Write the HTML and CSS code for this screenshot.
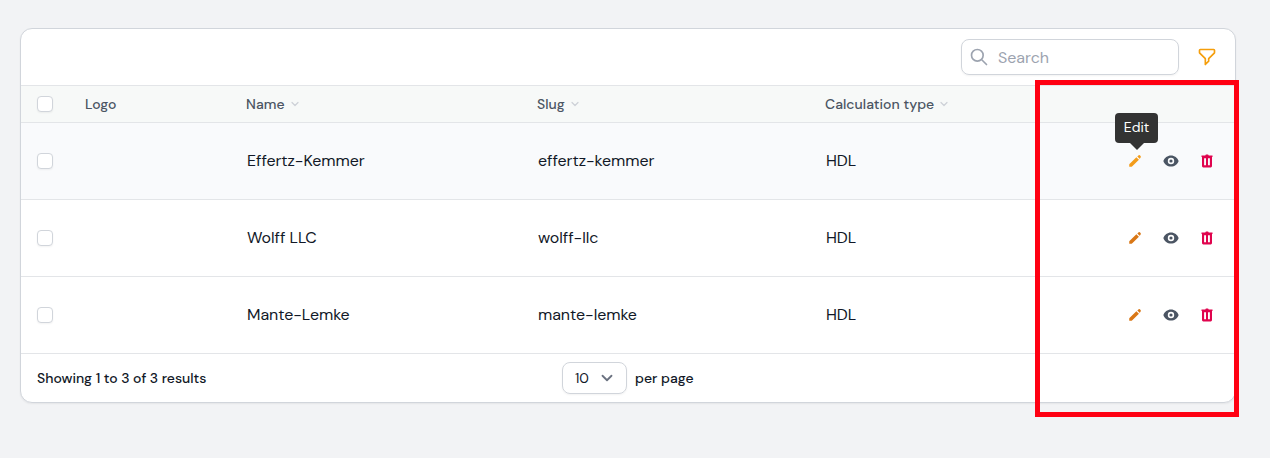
FILE: index.html
```html
<!DOCTYPE html>
<html lang="en">
<head>
<meta charset="utf-8">
<title>Results</title>
<link rel="stylesheet" href="styles.css">
</head>
<body>
<svg class="defs" aria-hidden="true">
  <symbol id="pencil" viewBox="0 0 20 20"><path d="M13.9 3.300a2 2 0 0 1 2.800 0 2 2 0 0 1 0 2.800l-1 1-2.800-2.800zM11.700 5.300l3.200 3.200-8.300 8.200a1.200 1.200 0 0 1-.8.400H2.800V14.500a1.200 1.200 0 0 1 .3-.7z"/></symbol>
  <symbol id="eye" viewBox="0 0 20 20"><path d="M10 12a2 2 0 100-4 2 2 0 000 4z"/><path fill-rule="evenodd" d="M.458 10C1.732 5.943 5.522 3 10 3s8.268 2.943 9.542 7c-1.274 4.057-5.064 7-9.542 7S1.732 14.057.458 10zM14 10a4 4 0 11-8 0 4 4 0 018 0z"/></symbol>
  <symbol id="trash" viewBox="0 0 16 16"><path fill-rule="evenodd" d="M6.3 2.400Q6.500 1.500 7.300 1.500h1.400q.8 0 1 .9h3.800v1.700H13v9q0 1.300-1.300 1.300H4.300Q3 14.400 3 13.100v-9h-.5V2.400zM5.100 5.300v6.900h1.900V5.300zM9 5.300v6.900h1.900V5.300z"/></symbol>
  <symbol id="chevron" viewBox="0 0 20 20"><path d="M5 7.500l5 5 5-5" fill="none" stroke="currentColor" stroke-width="2" stroke-linecap="round" stroke-linejoin="round"/></symbol>
</svg>
<main class="card">
  <div class="toolbar">
    <label class="search">
      <svg viewBox="0 0 24 24"><path d="M21 21l-6-6m2-5a7 7 0 11-14 0 7 7 0 0114 0z"/></svg>
      <input class="search-input" type="text" placeholder="Search">
    </label>
    <svg class="filter" viewBox="0 0 24 24"><path d="M3 4a1 1 0 011-1h16a1 1 0 011 1v2.586a1 1 0 01-.293.707l-6.414 6.414a1 1 0 00-.293.707V17l-4 4v-6.586a1 1 0 00-.293-.707L3.293 7.293A1 1 0 013 6.586V4z"/></svg>
  </div>
  <div class="row head">
    <span class="cell"><i class="check"></i></span>
    <span class="cell"><b class="th">Logo</b></span>
    <span class="cell"><b class="th">Name</b><svg class="sort"><use href="#chevron"/></svg></span>
    <span class="cell"><b class="th">Slug</b><svg class="sort"><use href="#chevron"/></svg></span>
    <span class="cell"><b class="th">Calculation type</b><svg class="sort"><use href="#chevron"/></svg></span>
    <span class="cell"></span>
  </div>
  <div class="row body hovered">
    <span class="cell"><i class="check"></i></span><span class="cell"></span>
    <span class="cell text">Effertz-Kemmer</span><span class="cell text">effertz-kemmer</span><span class="cell text">HDL</span>
    <span class="actions"><span class="edit"><svg class="icon"><use href="#pencil"/></svg><span class="tooltip">Edit</span></span><svg class="icon view"><use href="#eye"/></svg><svg class="icon delete"><use href="#trash"/></svg></span>
  </div>
  <div class="row body">
    <span class="cell"><i class="check"></i></span><span class="cell"></span>
    <span class="cell text">Wolff LLC</span><span class="cell text">wolff-llc</span><span class="cell text">HDL</span>
    <span class="actions"><span class="edit"><svg class="icon"><use href="#pencil"/></svg></span><svg class="icon view"><use href="#eye"/></svg><svg class="icon delete"><use href="#trash"/></svg></span>
  </div>
  <div class="row body">
    <span class="cell"><i class="check"></i></span><span class="cell"></span>
    <span class="cell text">Mante-Lemke</span><span class="cell text">mante-lemke</span><span class="cell text">HDL</span>
    <span class="actions"><span class="edit"><svg class="icon"><use href="#pencil"/></svg></span><svg class="icon view"><use href="#eye"/></svg><svg class="icon delete"><use href="#trash"/></svg></span>
  </div>
  <div class="footer">
    <span class="showing">Showing 1 to 3 of 3 results</span>
    <span class="select"><span>10</span><svg class="caret"><use href="#chevron"/></svg></span>
    <span class="per-page">per page</span>
  </div>
</main>
<div class="highlight"></div>
</body>
</html>
```
FILE: styles.css
```css
* { box-sizing: border-box; }
body {
  margin: 0;
  height: 458px;
  padding: 28px 34px 0 20px;
  overflow: hidden;
  background: #f2f3f5;
  color: #111827;
  font-family: "DM Sans", Lato, sans-serif;
  font-size: 16px;
}
.defs { position: absolute; width: 0; height: 0; }
.card {
  height: 375px;
  background: #fff;
  border: 1px solid #d1d5db;
  border-radius: 12px;
  box-shadow: 0 1px 2px rgba(0, 0, 0, .06);
}
.toolbar {
  display: flex;
  justify-content: flex-end;
  align-items: center;
  gap: 18px;
  height: 56px;
  padding-right: 18px;
}
.search {
  display: flex;
  align-items: center;
  gap: 9px;
  width: 218px;
  height: 36px;
  padding: 0 7px;
  border: 1px solid #d1d5db;
  border-radius: 8px;
  box-shadow: 0 1px 2px rgba(0, 0, 0, .05);
}
.search svg { flex: none; width: 20px; height: 20px; fill: none; stroke: #9ca3af; stroke-width: 2; stroke-linecap: round; stroke-linejoin: round; }
.search-input { width: 150px; padding: 0; border: 0; outline: 0; background: none; font: inherit; letter-spacing: 0; }
.search-input::placeholder { color: #9ca3af; opacity: 1; }
.filter { width: 20px; height: 20px; fill: none; stroke: #f59e0b; stroke-width: 2; stroke-linecap: round; stroke-linejoin: round; }
.row {
  display: grid;
  grid-template-columns: 48px 161px 291px 288px 1fr 150px;
  align-items: center;
  border-top: 1px solid #e3e5e8;
}
.cell { display: flex; align-items: center; padding-left: 16px; }
.text { padding: 0 0 2px 17px; letter-spacing: -.05px; }
.head { height: 37px; background: #f7f9f8; }
.th { color: #4b5563; font-size: 14px; font-weight: 500; letter-spacing: .04px; }
.sort { width: 12px; height: 12px; margin-left: 4px; color: #cdd1d7; }
.body { height: 77px; }
.hovered { background: #f9fafc; }
.check { width: 16px; height: 16px; background: #fff; border: 1px solid #d1d5db; border-radius: 4px; box-shadow: 0 1px 2px rgba(0, 0, 0, .05); }
.actions { display: flex; justify-content: flex-end; gap: 20px; padding-right: 20px; }
.icon { display: block; width: 16px; height: 16px; fill: currentColor; }
.edit { position: relative; color: #d97716; }
.hovered .edit { color: #f39c1b; }
.view { color: #4b5563; }
.delete { color: #e0044e; }
.tooltip {
  position: absolute;
  left: -12px;
  bottom: 26px;
  width: 43px;
  height: 30px;
  border-radius: 4px;
  background: #333;
  color: #fff;
  font-size: 14px;
  line-height: 28px;
  text-align: center;
}
.tooltip::after { content: ""; position: absolute; left: 15px; top: 30px; border: 7px solid transparent; border-top-color: #333; border-bottom: 0; }
.footer { display: flex; align-items: center; height: 49px; padding-left: 16px; border-top: 1px solid #e3e5e8; font-size: 14px; font-weight: 500; }
.showing { width: 525px; letter-spacing: -.02px; }
.select { display: flex; align-items: center; justify-content: space-between; width: 65px; height: 32px; padding: 0 10px 0 12px; border: 1px solid #d1d5db; border-radius: 8px; box-shadow: 0 1px 2px rgba(0, 0, 0, .05); font-weight: 400; }
.caret { width: 18px; height: 18px; color: #6b7280; }
.per-page { margin-left: 8px; letter-spacing: .02px; }
.highlight { position: absolute; left: 1035px; top: 80px; width: 204px; height: 337px; border: 5px solid #ff0012; }
```
